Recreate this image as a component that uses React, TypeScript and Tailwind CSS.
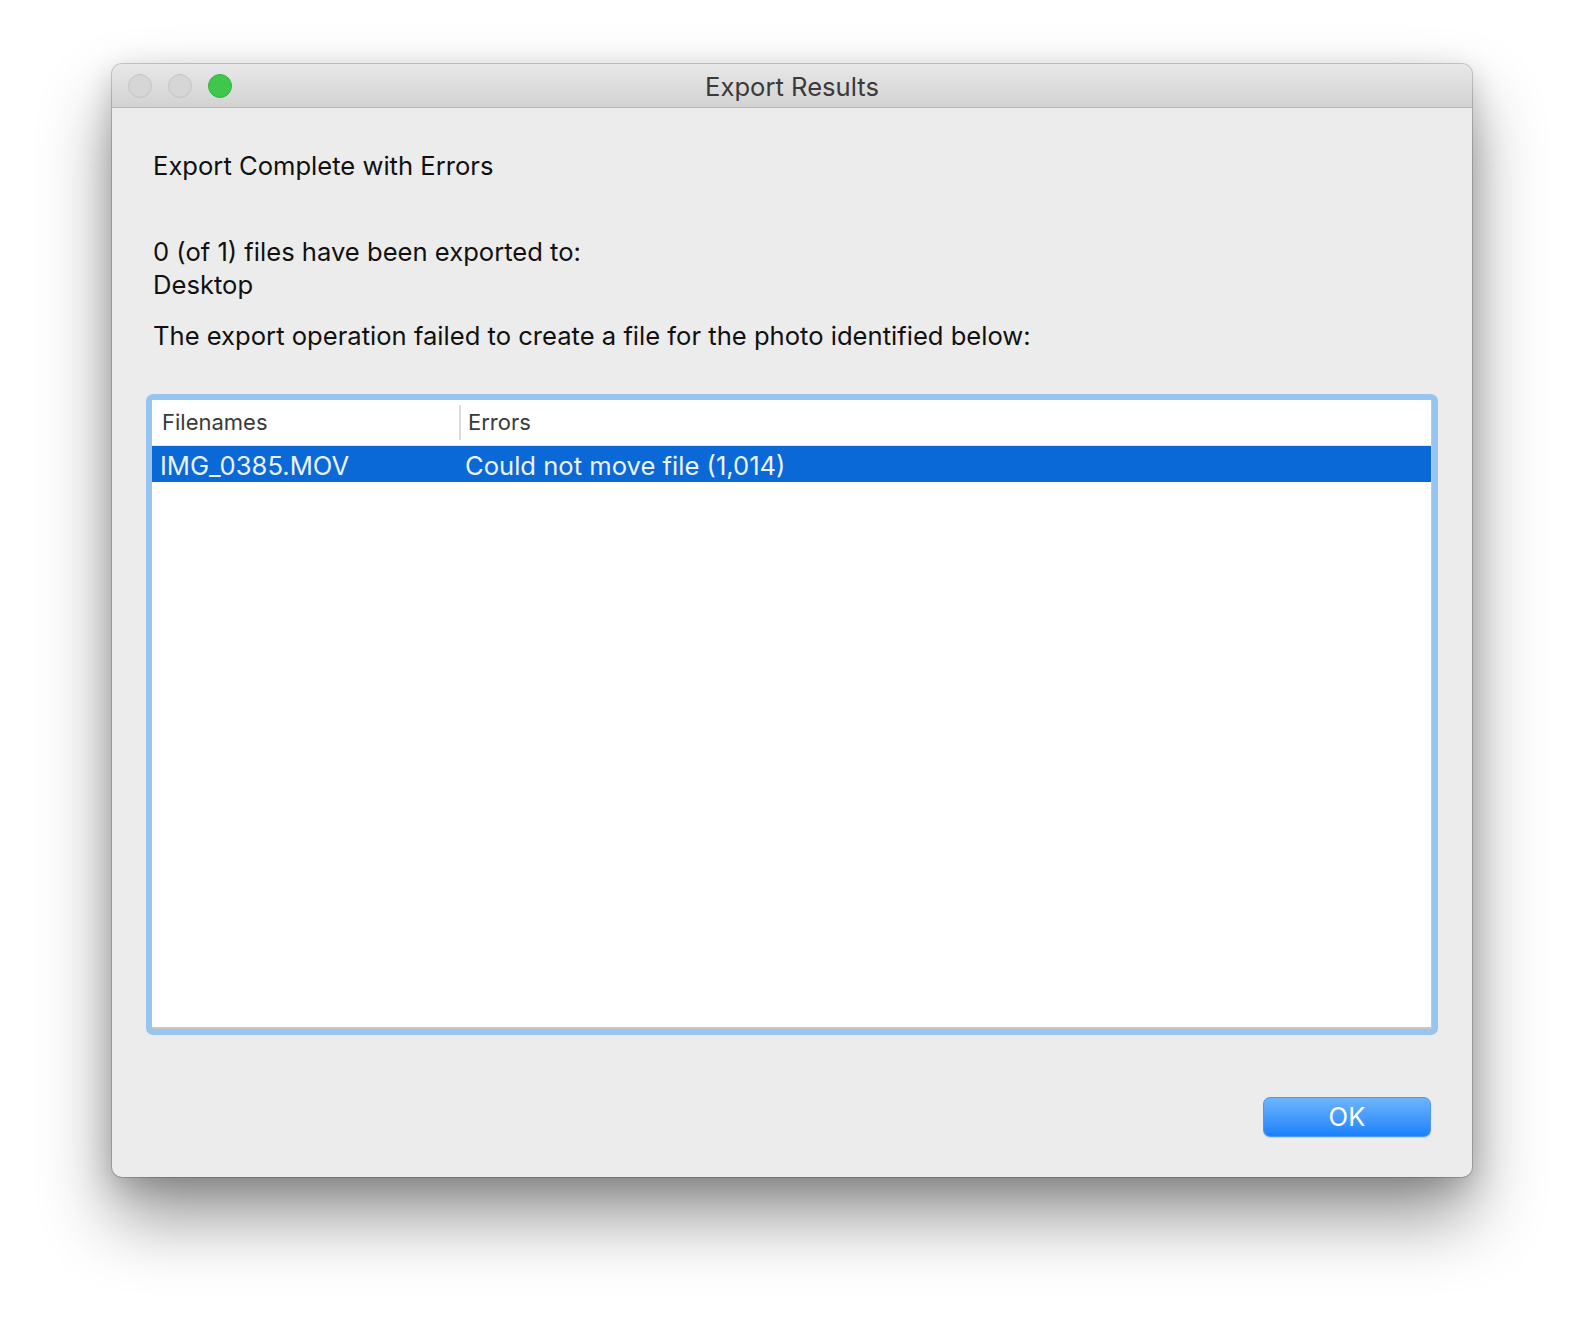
const font = { fontFamily: "Inter, 'Helvetica Neue', Arial, sans-serif" };

function TrafficLights() {
  return (
    <div className="flex items-center gap-[16px] pl-[16px]">
      <span className="h-[24px] w-[24px] rounded-full border border-[#c4c4c4] bg-[#d6d6d6]" />
      <span className="h-[24px] w-[24px] rounded-full border border-[#c4c4c4] bg-[#d6d6d6]" />
      <span className="h-[24px] w-[24px] rounded-full border border-[#30b43e] bg-[#3fc74c]" />
    </div>
  );
}

export default function App() {
  return (
    <div className="flex h-[1338px] w-full justify-center bg-white pt-[64px]" style={font}>
      <div className="flex h-[1113px] w-[1360px] flex-col overflow-hidden rounded-[10px] bg-[#ececec] shadow-[0_40px_70px_rgba(0,0,0,0.42),0_0_0_1px_rgba(0,0,0,0.18),0_8px_30px_rgba(0,0,0,0.18)]">
        {/* Title bar */}
        <div className="relative flex h-[44px] shrink-0 items-center border-b border-[#b9b9b9] bg-gradient-to-b from-[#e9e8e9] to-[#d3d2d3]">
          <TrafficLights />
          <div className="absolute inset-0 flex items-center justify-center pt-[3px] text-[25.6px] text-[#3a3a3a]">
            Export Results
          </div>
        </div>

        {/* Body */}
        <div className="flex flex-1 flex-col px-[34px] pt-[42px] text-[25.6px] text-[#111]">
          <h1 className="pl-[7px] leading-[32px]">Export Complete with Errors</h1>
          <div className="mt-[53px] pl-[7px] leading-[33px]">
            <p>0 (of 1) files have been exported to:</p>
            <p>Desktop</p>
          </div>
          <p className="mt-[18px] pl-[7px] leading-[33px]">
            The export operation failed to create a file for the photo identified below:
          </p>

          {/* Table with focus ring */}
          <div className="mt-[42px] h-[641px] rounded-[7px] bg-[#98c5f0] p-[6px]">
            <div className="flex h-full flex-col border-b-2 border-r border-[#c6c6c6] bg-white">
              <div className="flex h-[46px] items-center border-b border-[#e4e4e4] text-[22px] text-[#3a3a3a]">
                <div className="w-[307px] pl-[10px]">Filenames</div>
                <div className="h-[35px] w-[2px] bg-[#dcdcdc]" />
                <div className="pl-[7px]">Errors</div>
              </div>
              <div className="flex h-[36px] items-center bg-[#0a69d7] pt-[4px] text-[25.6px] text-[#edf2fa]">
                <div className="w-[309px] pl-[8px]">IMG_0385.MOV</div>
                <div className="pl-[4px]">Could not move file (1,014)</div>
              </div>
            </div>
          </div>

          <div className="mt-[62px] flex justify-end pr-[7px]">
            <button className="h-[40px] w-[168px] rounded-[7px] border border-[#4f98ee] bg-gradient-to-b from-[#6db5fb] to-[#1580fb] text-[25.6px] text-white shadow-[0_1px_1px_rgba(0,0,0,0.12)]">
              OK
            </button>
          </div>
        </div>
      </div>
    </div>
  );
}
